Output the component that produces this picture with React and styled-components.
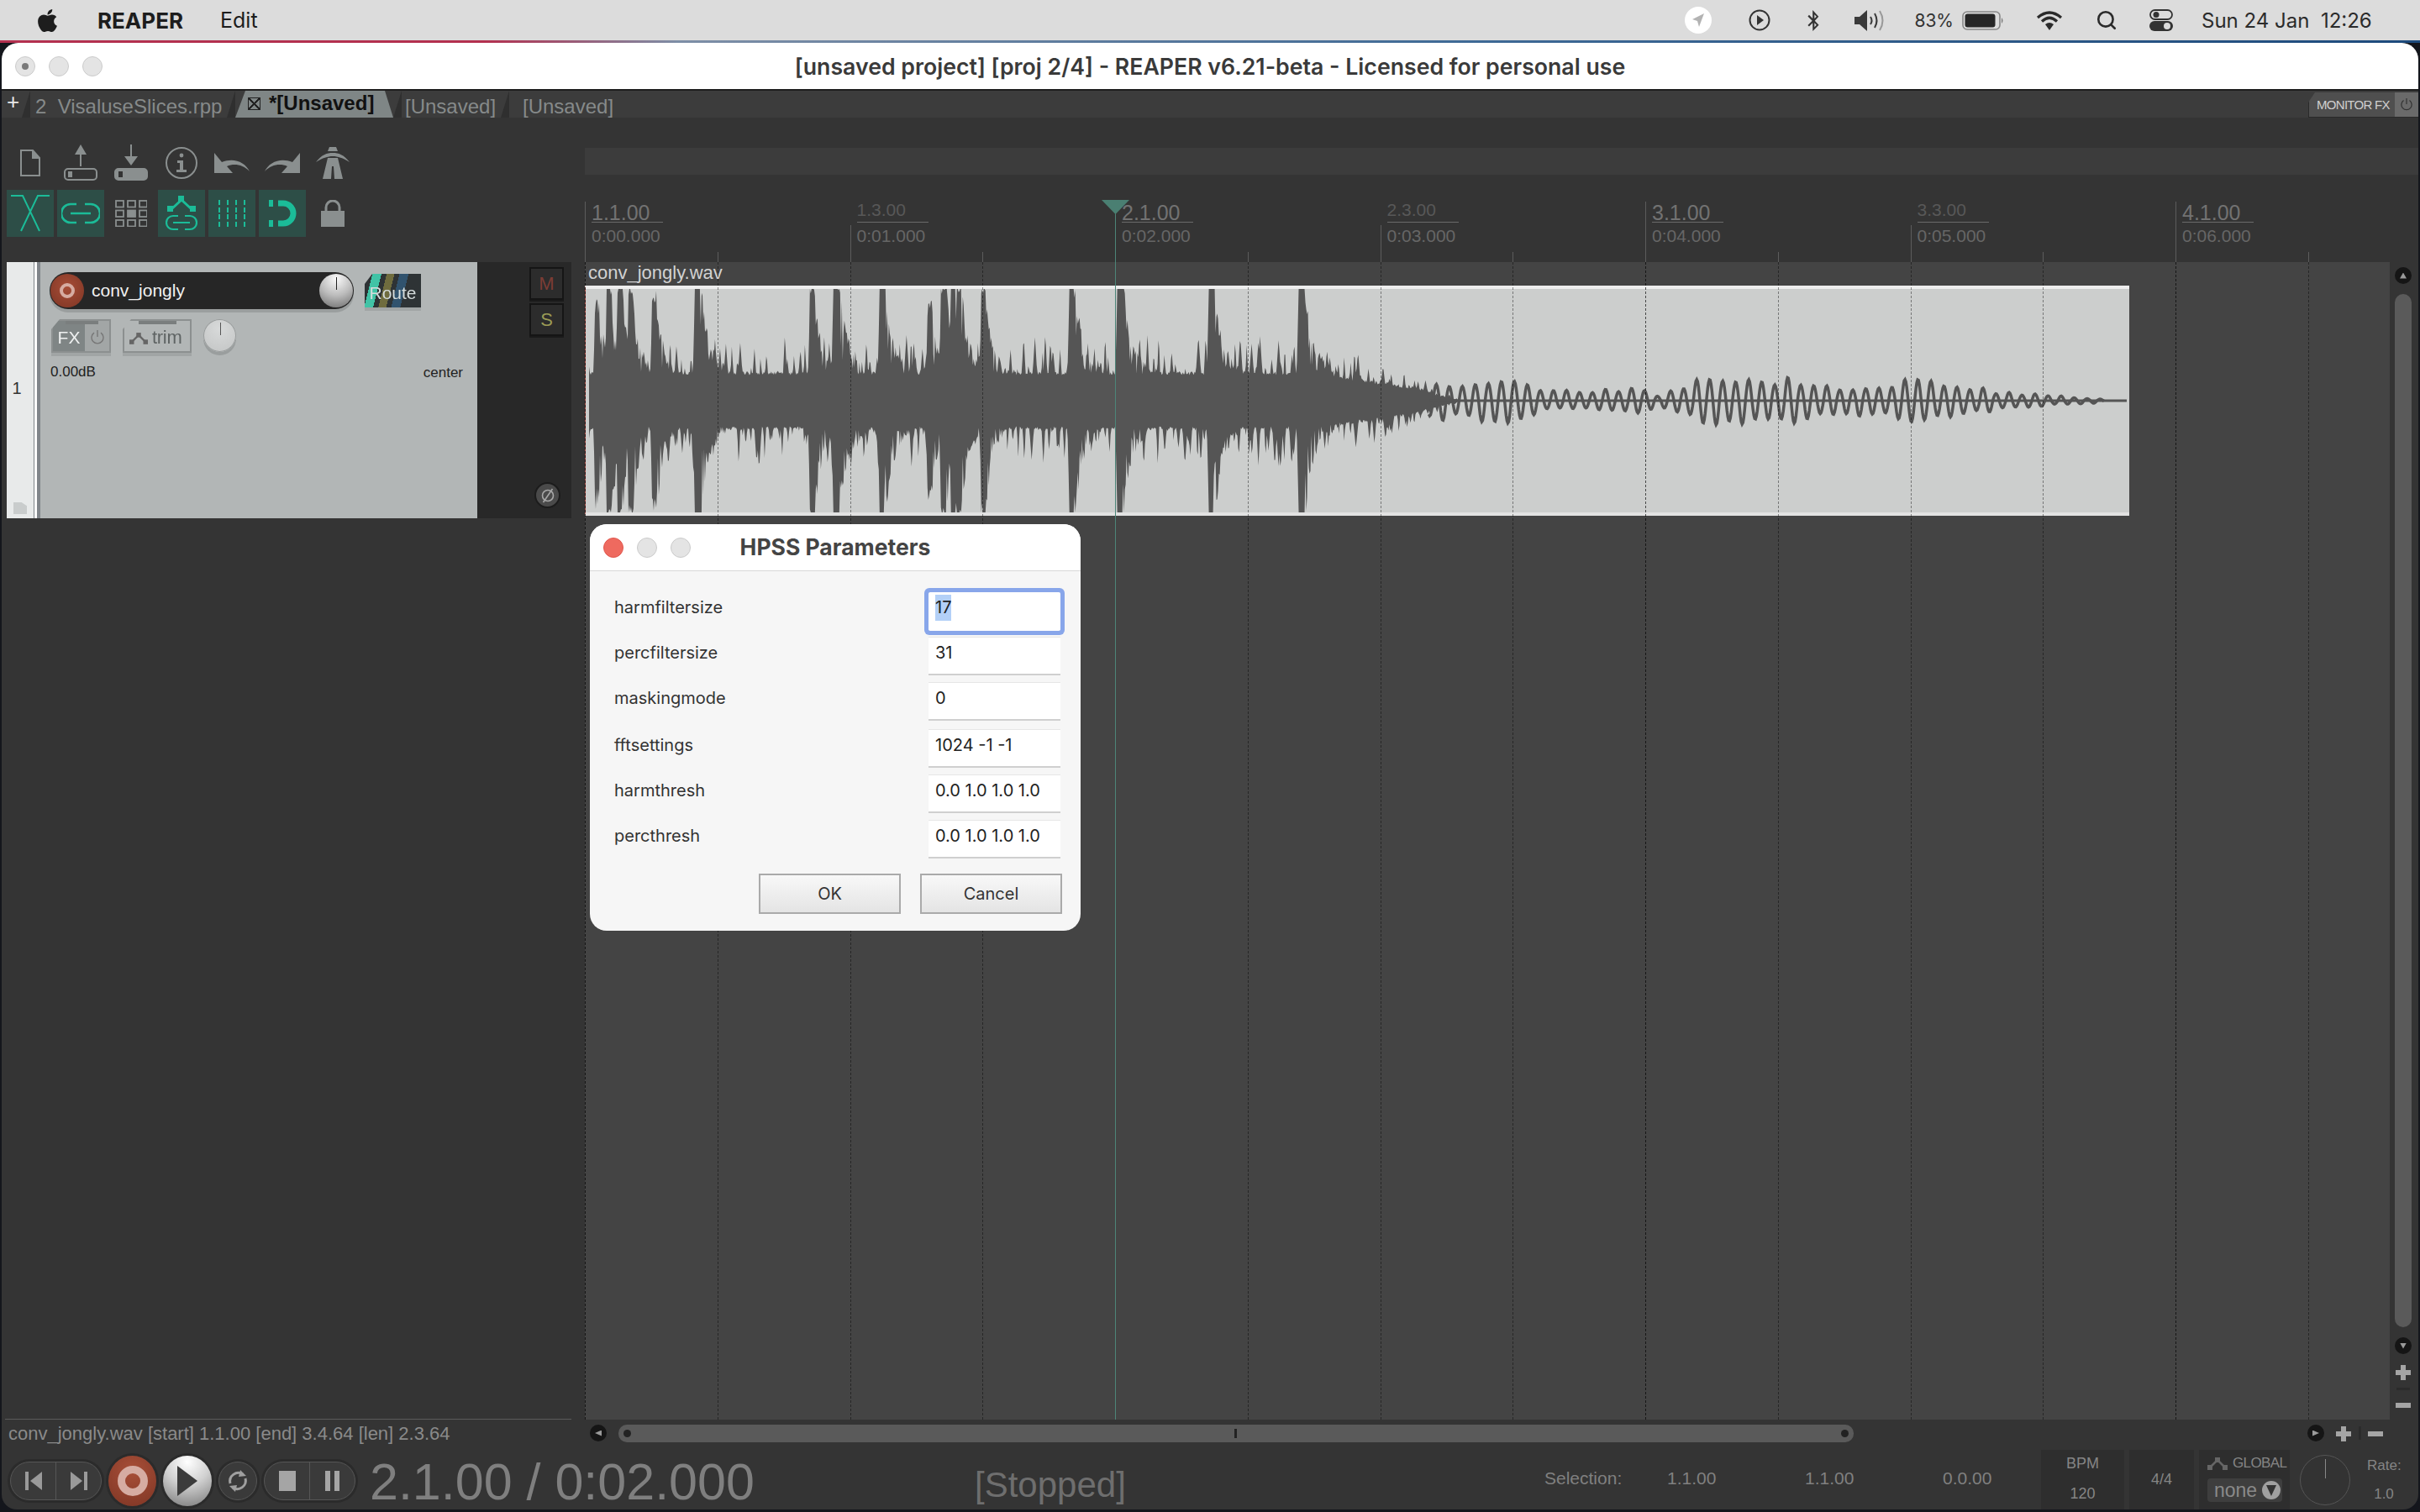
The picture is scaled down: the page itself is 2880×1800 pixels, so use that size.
import React from 'react'
import styled, { createGlobalStyle } from 'styled-components'
import { FaApple, FaBluetoothB } from 'react-icons/fa'
import { Search } from 'lucide-react'

const GlobalStyle = createGlobalStyle`
  html, body { margin: 0; padding: 0; background: #14161c; }
  * { box-sizing: border-box; }
`

const UI = `"Liberation Sans", Arial, sans-serif`
const SYS = `Inter, "Liberation Sans", sans-serif`

// waveform is made up from a seeded noise, so it stays the same on each load
const makeRand = (seed) => () => {
  seed = (seed * 1664525 + 1013904223) % 4294967296
  return seed / 4294967296
}

const ONSETS = [
  [708, 0.85], [722, 1.05], [735, 1.05], [748, 1], [776, 0.95], [827, 1.2], [964, 1.05], [992, 1.25],
  [1047, 1.15], [1104, 0.8], [1120, 1.05], [1132, 1.15], [1139, 1.05], [1168, 1], [1273, 1.2], [1330, 1.2],
  [1439, 1.2], [1546, 1.25],
]

const TAIL = [
  [1710, 0.16], [1800, 0.19], [1840, 0.09], [1900, 0.09], [1945, 0.12], [1975, 0.05], [2026, 0.2], [2138, 0.2],
  [2180, 0.13], [2240, 0.14], [2261, 0.19], [2310, 0.17], [2370, 0.09], [2433, 0.05], [2493, 0.02], [2531, 0],
]

const lerpTail = (x) => {
  for (let i = 0; i < TAIL.length - 1; i++) {
    const [a, va] = TAIL[i]
    const [b, vb] = TAIL[i + 1]
    if (x >= a && x <= b) return va + ((vb - va) * (x - a)) / (b - a)
  }
  return 0
}

const fade = (x) => (x < 1560 ? 1 : Math.max(0.3, 1 - (0.7 * (x - 1560)) / 150))

// one side of the body: a solid core, narrow spikes on top of it, and the hits
const buildSide = (rand, from, to) => {
  const out = new Float32Array(to - from)
  for (let x = from; x < to; x++) out[x - from] = 0.23 * fade(x) + 0.03 * rand()
  let sx = from
  while (sx < to) {
    const h = (0.26 + 0.36 * rand()) * fade(sx)
    const w = 2 + 3 * rand()
    for (let x = Math.floor(sx - w); x <= sx + w; x++) {
      if (x < from || x >= to) continue
      const v = h * (1 - Math.abs(x - sx) / (w + 0.6))
      if (v > out[x - from]) out[x - from] = v
    }
    sx += 2 + rand() * 7
  }
  ONSETS.forEach(([o, s]) => {
    for (let x = o - 5; x < o + 130 && x < to; x++) {
      if (x < from) continue
      const d = x - o
      let v
      if (d < -1) v = s * Math.exp((d + 1) / 1.6)
      else if (d < 5) v = s * (0.9 + 0.25 * rand())
      else {
        const decay = 0.55 * Math.exp(-(d - 5) / 5) + 0.5 * Math.exp(-(d - 5) / 42)
        v = s * decay * (rand() < 0.35 ? 0.45 + 0.4 * rand() : 0.8 + 0.25 * rand())
      }
      if (v > out[x - from]) out[x - from] = v
    }
  })
  return out
}

const buildWave = () => {
  const rand = makeRand(74213)
  const C = 133
  const from = 700
  const to = 1740
  const t = buildSide(rand, from, to)
  const b = buildSide(rand, from, to)
  const top = []
  const bottom = []
  for (let x = from; x < to; x++) {
    // the hits thin out into the low tail
    const k = x > 1690 ? Math.max(0, 1 - (x - 1690) / 50) : 1
    top.push(`${x - 696},${(C - Math.min(1, t[x - from]) * C * k).toFixed(1)}`)
    bottom.unshift(`${x - 696},${(C + Math.min(1, b[x - from]) * C * k).toFixed(1)}`)
  }
  const body = `M${top.join('L')}L${bottom.join('L')}Z`
  const tail = []
  let jitter = 1
  let lastCycle = -1
  for (let x = 1700; x < 2505; x++) {
    const cycle = Math.floor((x * 2) / 15.5)
    if (cycle !== lastCycle) {
      jitter = 0.7 + 0.4 * rand()
      lastCycle = cycle
    }
    const a = lerpTail(Math.max(x, 1710)) * C * jitter
    const y = C - a * Math.sin((x * 2 * Math.PI) / 15.5)
    tail.push(`${x - 696},${y.toFixed(1)}`)
  }
  return { body, tail: `M${tail.join('L')}` }
}

const WAVE = buildWave()

const Page = styled.div`
  position: relative;
  width: 2880px;
  height: 1800px;
  overflow: hidden;
  display: flex;
  flex-direction: column;
  background: #14161c;
  font-family: ${UI};
`

/* mac menu bar */
const MenuBar = styled.div`
  height: 48px;
  background: #dcdcdc;
  display: flex;
  align-items: center;
  color: #1d1d1d;
  font-family: ${SYS};
  font-size: 25px;
  padding-left: 41px;
`
const MenuApp = styled.span`
  font-weight: 700;
  margin-left: 44px;
  font-size: 26px;
`
const MenuItem = styled.span`
  margin-left: 44px;
  font-size: 25px;
`
const MenuStatus = styled.div`
  margin-left: auto;
  display: flex;
  align-items: center;
  padding-right: 38px;
  color: #2b2b2b;
`
const StatusSlot = styled.div`
  width: ${(p) => p.$w}px;
  margin-left: ${(p) => p.$ml}px;
  display: flex;
  justify-content: center;
  align-items: center;
`
const Percent = styled.span`
  font-size: 21px;
  color: #333;
  margin-left: 34px;
`
const Clock = styled.span`
  font-size: 24px;
  margin-left: 34px;
  width: 222px;
  white-space: pre;
`

const Strip = styled.div`
  height: 3px;
  background: linear-gradient(90deg, #b3304f 0, #b3304f 20%, #7d8ea6 28%, #3f6a96 60%, #1d4a7c 100%);
`

const Window = styled.div`
  flex: 1;
  margin: 0 2px 3px;
  display: flex;
  flex-direction: column;
  background: #343434;
  border-radius: 20px 20px 18px 18px;
  overflow: hidden;
`
const TitleBar = styled.div`
  height: 57px;
  background: #fff;
  border-bottom: 2px solid #1e1e1e;
  display: flex;
  align-items: center;
  position: relative;
  padding-left: 16px;
`
const Lights = styled.div`
  display: flex;
  gap: 16px;
`
const Light = styled.div`
  width: 24px;
  height: 24px;
  border-radius: 50%;
  background: ${(p) => p.$color || '#e4e4e4'};
  border: 1px solid ${(p) => (p.$color ? '#e0574e' : '#cbcbcb')};
  display: flex;
  align-items: center;
  justify-content: center;
`
const LightDot = styled.div`
  width: 8px;
  height: 8px;
  border-radius: 50%;
  background: #7a7a7a;
`
const WindowTitle = styled.div`
  flex: 1;
  text-align: center;
  padding-right: 120px;
  font-family: ${SYS};
  font-size: 26.700px;
  font-weight: 600;
  color: #3a3a3a;
  white-space: pre;
`

const TabRow = styled.div`
  height: 32px;
  background: #3c3c3c;
  display: flex;
  align-items: stretch;
  font-size: 24px;
  color: #868a8a;
`
const TabPlus = styled.div`
  width: 24px;
  padding-left: 6px;
  font-size: 26px;
  line-height: 26px;
  color: #e8e8e8;
`
const TabNotch = styled.div`
  width: ${(p) => p.$w || 12}px;
  background: #2f2f2f;
  clip-path: polygon(100% 0, 100% 100%, 0 100%);
`
const Tab = styled.div`
  width: ${(p) => p.$w}px;
  padding-left: ${(p) => p.$pl}px;
  line-height: 38px;
  white-space: pre;
  overflow: hidden;
`
const ActiveTab = styled.div`
  width: 188px;
  background: #7f8686;
  clip-path: polygon(12px 0, calc(100% - 10px) 0, 100% 100%, 0 100%);
  display: flex;
  align-items: center;
  padding: 0 0 2px 15px;
  gap: 10px;
  font-weight: 700;
  color: #111;
  font-size: 24px;
`
const CloseBox = styled.div`
  width: 15px;
  height: 15px;
  border: 1px solid #222;
  position: relative;
  background: linear-gradient(45deg, transparent 46%, #222 46% 54%, transparent 54%),
    linear-gradient(-45deg, transparent 46%, #222 46% 54%, transparent 54%);
`
const MonitorFx = styled.div`
  margin-left: auto;
  width: 131px;
  flex: none;
  margin-top: 2px;
  background: #4f4f4f;
  border-left: 1px solid #2a2a2a;
  border-bottom: 1px solid #2a2a2a;
  clip-path: polygon(8px 0, 100% 0, 100% 100%, 0 100%, 0 12px);
  display: flex;
  align-items: center;
  justify-content: space-between;
  padding-left: 9px;
  font-size: 15px;
  color: #cfcfcf;
  letter-spacing: -0.7px;
  white-space: nowrap;
`
const MonitorPower = styled.div`
  width: 28px;
  height: 100%;
  background: #6a6a6a;
  display: flex;
  align-items: center;
  justify-content: center;
`

const Upper = styled.div`
  height: 1550px;
  display: flex;
`
const LeftColumn = styled.div`
  width: 694px;
  flex: none;
  display: flex;
  flex-direction: column;
`
const Toolbar = styled.div`
  height: 172px;
  padding: 32px 0 0 6px;
  display: grid;
  grid-template-columns: repeat(7, 56px);
  grid-template-rows: 44px 56px;
  column-gap: 4px;
  row-gap: 10px;
`
const ToolCell = styled.div`
  display: flex;
  align-items: center;
  justify-content: center;
  background: ${(p) => (p.$on ? '#2d4e47' : 'transparent')};
`

/* track */
const TrackRow = styled.div`
  height: 305px;
  display: flex;
  margin-left: 6px;
  width: 672px;
`
const TrackNumber = styled.div`
  width: 32px;
  background: #e8eaea;
  position: relative;
  display: flex;
  align-items: center;
  justify-content: center;
  font-size: 20px;
  color: #333;
  padding: 0 8px 4px 0;
`
const FolderMark = styled.div`
  position: absolute;
  left: 8px;
  bottom: 5px;
  width: 16px;
  height: 14px;
  background: #c9cccc;
  clip-path: polygon(0 0, 60% 0, 100% 30%, 100% 100%, 0 100%);
`
const TrackEdge = styled.div`
  width: 8px;
  background: linear-gradient(90deg, #80858a 0 1px, #fff 1px 4px, #80858a 4px);
`
const TrackPanel = styled.div`
  width: 520px;
  background: #b2b6b6;
  padding: 12px 17px 0 11px;
  display: flex;
  flex-direction: column;
`
const PanelRow = styled.div`
  display: flex;
  align-items: flex-start;
  margin-top: ${(p) => p.$mt || 0}px;
  gap: ${(p) => p.$gap || 0}px;
  padding-left: ${(p) => p.$pl || 0}px;
`
const NameBar = styled.div`
  width: 362px;
  height: 44px;
  border-radius: 22px;
  background: #262626;
  box-shadow: 0 4px 0 #9a9e9e;
  display: flex;
  align-items: center;
  padding: 0 1px;
  color: #f2f2f2;
  font-size: 21px;
`
const RecArm = styled.div`
  width: 40px;
  height: 40px;
  border-radius: 50%;
  background: radial-gradient(circle at 50% 40%, #a64d37, #7e3524);
  display: flex;
  align-items: center;
  justify-content: center;
  margin-right: 9px;
`
const RecRing = styled.div`
  width: ${(p) => p.$size || 18}px;
  height: ${(p) => p.$size || 18}px;
  border-radius: 50%;
  border: ${(p) => p.$bw || 4}px solid #d6aca2;
`
const Knob = styled.div`
  position: relative;
  width: ${(p) => p.$size}px;
  height: ${(p) => p.$size}px;
  border-radius: 50%;
  flex: none;
  background: ${(p) => p.$bg};
  box-shadow: ${(p) => p.$shadow || 'none'};
  &::after {
    content: '';
    position: absolute;
    left: 50%;
    top: 4px;
    width: 1px;
    height: ${(p) => Math.round(p.$size * 0.38)}px;
    background: ${(p) => p.$tick || '#222'};
  }
`
const TrimKnob = styled(Knob)`
  margin-left: 14px;
`
const NameText = styled.span`
  flex: 1;
`
const Raised = styled.div`
  filter: drop-shadow(0 4px 0 #a1a5a5);
  margin-left: ${(p) => p.$ml || 0}px;
`
const RouteButton = styled.div`
  width: 67px;
  height: 40px;
  margin-top: 2px;
  clip-path: polygon(9px 0, 100% 0, 100% 100%, 0 100%, 0 12px);
  background:
    linear-gradient(104deg, transparent 12%, #41c3a6 12% 26%, transparent 26% 34%, #6f6c3e 34% 46%, transparent 46% 54%, #31536e 54% 68%, transparent 68%),
    #2e3335;
  color: #d5dcdc;
  font-size: 21px;
  line-height: 46px;
  text-align: center;
`
const CutButton = styled.div`
  width: ${(p) => p.$w}px;
  height: 40px;
  clip-path: polygon(10px 0, 100% 0, 100% 100%, 0 100%, 0 12px);
  border: 2px solid #8c9090;
  display: flex;
  position: relative;
  background: #b2b6b6;
  color: #5f6464;
  font-size: 23px;
  align-items: center;
  &::before {
    content: '';
    position: absolute;
    top: 0;
    left: 22%;
    width: 58%;
    height: 4px;
    background: #7a7e7e;
  }
`
const FxPart = styled.div`
  width: 38px;
  height: 100%;
  background: #7f8585;
  color: #eef0f0;
  font-size: 21px;
  display: flex;
  align-items: center;
  justify-content: center;
  padding-top: 3px;
`
const PowerPart = styled.div`
  flex: 1;
  height: 100%;
  background: #a2a6a6;
  display: flex;
  align-items: center;
  justify-content: center;
  padding-top: 3px;
`
const TrimPart = styled.div`
  flex: 1;
  height: 100%;
  display: flex;
  align-items: center;
  gap: 5px;
  padding: 4px 0 0 6px;
  font-size: 22px;
  letter-spacing: -0.3px;
`
const Readout = styled.div`
  display: flex;
  justify-content: space-between;
  margin: 13px 0 0 1px;
  font-size: 17px;
  color: #222;
`
const PanText = styled.span`
  margin-top: 1px;
`
const TrackSide = styled.div`
  flex: 1;
  background: #282828;
  display: flex;
  flex-direction: column;
  align-items: flex-end;
  padding: 6px 9px 12px 0;
`
const SideButton = styled.div`
  width: 41px;
  height: 39px;
  margin-bottom: 4px;
  background: #2c2c2c;
  border: 2px solid #151515;
  box-shadow: 0 2px 0 #1a1a1a;
  display: flex;
  align-items: center;
  justify-content: center;
  font-size: 22px;
  color: ${(p) => p.$color};
`
const PhaseButton = styled.div`
  margin-top: auto;
  margin-right: 4px;
  width: 31px;
  height: 31px;
  border-radius: 50%;
  background: #4a4a4a;
  border: 2px solid #1c1c1c;
  color: #a8a8a8;
  display: flex;
  align-items: center;
  justify-content: center;
`

/* timeline */
const RightColumn = styled.div`
  flex: 1;
  min-width: 0;
  position: relative;
  display: flex;
  flex-direction: column;
  overflow: hidden;
`
const TopBand = styled.div`
  height: 32px;
  margin-top: 36px;
  background: #3c3c3c;
`
const Ruler = styled.div`
  height: 104px;
  display: flex;
`
const RulerCell = styled.div`
  position: relative;
  width: 315.500px;
  flex: none;
  padding: 33px 0 0 8px;
  &::before {
    content: '';
    position: absolute;
    left: 0;
    bottom: 0;
    width: 1px;
    height: ${(p) => (p.$major ? 72 : 44)}px;
    background: #5c5c5c;
  }
  &::after {
    content: '';
    position: absolute;
    left: 50%;
    bottom: 0;
    width: 1px;
    height: 12px;
    background: #5c5c5c;
  }
`
const RulerBar = styled.div`
  width: 85px;
  height: 24px;
  border-bottom: 1px solid #6a6a6a;
  color: ${(p) => (p.$major ? '#727272' : '#585858')};
  font-size: ${(p) => (p.$major ? 25 : 21)}px;
  line-height: ${(p) => (p.$major ? 24 : 18)}px;
`
const RulerTime = styled.div`
  font-size: 21px;
  line-height: 26px;
  margin-top: 3px;
  color: #666;
`
const Playhead = styled.div`
  position: absolute;
  left: 631px;
  top: 100px;
  bottom: 0;
  width: 1px;
  background: #4d8578;
  z-index: 3;
  &::before {
    content: '';
    position: absolute;
    left: -16px;
    top: -2px;
    width: 33px;
    height: 17px;
    background: #4a7f72;
    clip-path: polygon(0 0, 100% 0, 50% 100%);
  }
`
const ArrangeRow = styled.div`
  flex: 1;
  display: flex;
  min-height: 0;
`
const Arrange = styled.div`
  width: 2148px;
  flex: none;
  position: relative;
  background: #444;
  overflow: hidden;
`
const GridLayer = styled.div`
  position: absolute;
  inset: 0;
  display: flex;
  pointer-events: none;
`
const GridLine = styled.div`
  width: 157.750px;
  flex: none;
  border-left: 1px dashed ${(p) => (p.$measure ? 'rgba(0,0,0,0.65)' : 'rgba(0,0,0,0.42)')};
`
const Clip = styled.div`
  width: 1838px;
`
const ClipName = styled.div`
  height: 28px;
  padding-left: 4px;
  font-size: 22px;
  line-height: 26px;
  color: #d2d2d2;
`
const ClipBody = styled.div`
  height: 274px;
  background: #cccecd;
  border-top: 4px solid #eeeeee;
  border-bottom: 4px solid #e2e2e2;
  border-left: 1px solid #a5473f;
  display: flex;
`
const VScroll = styled.div`
  flex: 1;
  padding: 6px 0 0 6px;
  display: flex;
  flex-direction: column;
  align-items: flex-start;
`
const ScrollArrow = styled.div`
  width: 20px;
  height: 20px;
  border-radius: 50%;
  flex: none;
  background: #151515;
  display: flex;
  align-items: center;
  justify-content: center;
  margin: ${(p) => p.$m || 0};
`
const Tri = styled.div`
  width: 8px;
  height: 7px;
  background: #9a9a9a;
  clip-path: ${(p) =>
    ({
      up: 'polygon(50% 0, 100% 100%, 0 100%)',
      down: 'polygon(0 0, 100% 0, 50% 100%)',
      left: 'polygon(100% 0, 100% 100%, 0 50%)',
      right: 'polygon(0 0, 100% 50%, 0 100%)',
    })[p.$dir]};
`
const VThumb = styled.div`
  width: 20px;
  height: 1230px;
  flex: none;
  border-radius: 10px;
  background: #5a5a5a;
`
const ZoomMark = styled.div`
  color: #9d9d9d;
  width: 18px;
  height: 18px;
  flex: none;
  position: relative;
  margin: ${(p) => p.$m || 0};
  &::before {
    content: '';
    position: absolute;
    left: 0;
    right: 0;
    top: 6px;
    height: 6px;
    background: #a5a5a5;
  }
  &::after {
    content: '';
    display: ${(p) => (p.$plus ? 'block' : 'none')};
    position: absolute;
    top: 0;
    bottom: 0;
    left: 6px;
    width: 6px;
    background: #a5a5a5;
  }
`
const ZoomSep = styled.div`
  background: #2b2b2b;
  flex: none;
  width: ${(p) => p.$w}px;
  height: ${(p) => p.$h}px;
  margin: ${(p) => p.$m};
`

/* lower part */
const Lower = styled.div`
  height: 36px;
  display: flex;
  position: relative;
`
const StatusText = styled.div`
  width: 700px;
  flex: none;
  padding: 5px 0 0 8px;
  position: relative;
  font-size: 22px;
  line-height: 24px;
  color: #8a8a8a;
  white-space: pre;
  &::before {
    content: '';
    position: absolute;
    top: -1px;
    left: 4px;
    width: 674px;
    height: 1px;
    background: #5b5b5b;
  }
`
const HScroll = styled.div`
  flex: 1;
  display: flex;
  align-items: flex-start;
  padding-top: 6px;
`
const HThumb = styled.div`
  width: 1470px;
  height: 21px;
  flex: none;
  margin-left: 14px;
  border-radius: 10px;
  background: #5a5a5a;
  display: flex;
  align-items: center;
  justify-content: space-between;
  padding: 0 6px;
  position: relative;
  &::after {
    content: '';
    position: absolute;
    left: 733px;
    top: 5px;
    width: 3px;
    height: 11px;
    background: #222;
  }
`
const ThumbDot = styled.div`
  width: 9px;
  height: 9px;
  border-radius: 50%;
  background: #222;
`

const Transport = styled.div`
  height: 71px;
  display: flex;
  align-items: flex-start;
  padding-left: 10px;
  color: #8a8a8a;
`
const ButtonCluster = styled.div`
  display: flex;
  align-items: center;
  gap: 8px;
  height: 71px;
  padding-top: 3px;
  flex: none;
`
const Pill = styled.div`
  width: ${(p) => p.$w}px;
  height: 46px;
  border-radius: 23px;
  background: #3a3a3a;
  border: 1px solid #565656;
  box-shadow: 0 0 0 3px #2b2b2b;
  display: flex;
  align-items: stretch;
  overflow: hidden;
`
const PillPart = styled.div`
  flex: 1;
  display: flex;
  align-items: center;
  justify-content: center;
  & + & {
    border-left: 1px solid #565656;
  }
`
const RoundButton = styled.div`
  width: ${(p) => p.$w}px;
  height: ${(p) => p.$h}px;
  border-radius: 50%;
  flex: none;
  background: ${(p) => p.$bg};
  box-shadow: 0 0 0 3px #2b2b2b;
  border: ${(p) => p.$border || 'none'};
  display: flex;
  align-items: center;
  justify-content: center;
`
const BigTime = styled.div`
  width: 735px;
  flex: none;
  padding: 6px 0 0 17px;
  font-size: 61px;
  line-height: 64px;
  color: #7f7f7f;
  white-space: pre;
`
const StateText = styled.div`
  width: 680px;
  flex: none;
  padding: 20px 0 0 2px;
  font-size: 42px;
  line-height: 44px;
  color: #6e6e6e;
`
const SelectionField = styled.div`
  width: ${(p) => p.$w}px;
  flex: none;
  padding-top: 22px;
  font-size: 21px;
  line-height: 24px;
  color: #808080;
`
const InfoBox = styled.div`
  width: ${(p) => p.$w}px;
  height: 71px;
  flex: none;
  margin-right: 6px;
  background: #2e2e2e;
  display: flex;
  flex-direction: column;
  align-items: center;
  justify-content: ${(p) => p.$justify || 'center'};
  padding: ${(p) => p.$pad || 0};
  font-size: 18px;
  color: #858585;
`
const GlobalBox = styled.div`
  width: 108px;
  height: 71px;
  flex: none;
  background: #2e2e2e;
  padding: 6px 0 0 10px;
`
const GlobalLabel = styled.div`
  display: flex;
  align-items: center;
  gap: 6px;
  font-size: 17px;
  letter-spacing: -0.6px;
  color: #858585;
`
const NoneSelect = styled.div`
  width: 89px;
  height: 28px;
  margin-top: 8px;
  background: #3e3e3e;
  border-radius: 4px;
  display: flex;
  align-items: center;
  justify-content: space-between;
  padding: 0 2px 0 8px;
  font-size: 23px;
  color: #8a8a8a;
`
const SelectArrow = styled.div`
  width: 22px;
  height: 22px;
  border-radius: 50%;
  background: #a0a0a0;
  display: flex;
  align-items: center;
  justify-content: center;
`
const RateKnob = styled(Knob)`
  margin: 6px 0 0 12px;
  border: 1px solid #555;
`
const RateBox = styled.div`
  width: 40px;
  flex: none;
  margin-left: 20px;
  padding-top: 9px;
  font-size: 17px;
  color: #858585;
  text-align: center;
`
const RateValue = styled.div`
  margin-top: 14px;
  font-size: 17px;
`

/* dialog */
const Dialog = styled.div`
  position: absolute;
  left: 702px;
  top: 624px;
  width: 584px;
  height: 484px;
  border-radius: 20px;
  background: #f6f6f6;
  overflow: hidden;
  font-family: ${SYS};
  z-index: 5;
`
const DialogHead = styled.div`
  height: 56px;
  background: #fff;
  border-bottom: 1px solid #d8d8d8;
  display: flex;
  align-items: center;
  padding-left: 16px;
`
const DialogTitle = styled.div`
  flex: 1;
  text-align: center;
  padding: 0 120px 2px 0;
  font-size: 26.500px;
  font-weight: 700;
  color: #444;
  white-space: nowrap;
`
const Form = styled.div`
  padding: 25px 24px 0 29px;
`
const FormRow = styled.div`
  display: flex;
  justify-content: space-between;
  margin-top: ${(p) => p.$mt}px;
`
const FormLabel = styled.div`
  font-size: 20px;
  line-height: 36px;
  color: #333;
`
const Field = styled.div`
  width: 157px;
  height: ${(p) => (p.$focus ? 46 : 45)}px;
  padding-left: 8px;
  background: #fff;
  font-size: 20px;
  line-height: 36px;
  color: #222;
  border-bottom: 2px solid ${(p) => (p.$focus ? '#fff' : '#cfcfcf')};
  box-shadow: ${(p) => (p.$focus ? '0 0 0 5px #88a6ea' : '0 -1px 0 #e6e6e6')};
  border-radius: ${(p) => (p.$focus ? '2px' : '0')};
`
const Selected = styled.span`
  background: #b3d0f7;
  padding: 3px 0 4px;
`
const DialogButtons = styled.div`
  display: flex;
  justify-content: flex-end;
  gap: 23px;
  margin: 18px -2px 0 0;
`
const DialogButton = styled.div`
  width: 169px;
  height: 48px;
  border: 2px solid #aaa;
  background: linear-gradient(#f8f8f8, #e4e4e4);
  display: flex;
  align-items: center;
  justify-content: center;
  font-size: 20px;
  color: #333;
`

/* drawn icons */
const GRAY = '#8a8f8f'
const TEAL = '#1bbc98'

const DocIcon = () => (
  <svg width="26" height="34" viewBox="0 0 26 34">
    <path d="M2 2h14l8 9v21H2z M16 2v9h8" fill="none" stroke={GRAY} strokeWidth="2" />
    <path d="M16 2l8 9h-8z" fill={GRAY} />
  </svg>
)
const DriveIcon = ({ up, filled }) => (
  <svg width="42" height="44" viewBox="0 0 42 44">
    <rect x="2" y="29" width="38" height="13" rx="4" fill={filled ? GRAY : 'none'} stroke={GRAY} strokeWidth="2" />
    <rect x="6" y="32" width="5" height="7" fill={filled ? '#333' : GRAY} />
    {up ? <path d="M20 26V12h-6l7-12 7 12h-6v14z" fill={GRAY} /> : <path d="M20 0h2v14h7l-8 11-8-11h7z" fill={GRAY} />}
  </svg>
)
const InfoIcon = () => (
  <svg width="40" height="38" viewBox="0 0 40 38">
    <ellipse cx="20" cy="19" rx="18" ry="18" fill="none" stroke={GRAY} strokeWidth="2" />
    <circle cx="20" cy="10" r="2.400" fill={GRAY} />
    <path d="M15 16h7v11h4v3H14v-3h4v-8h-3z" fill={GRAY} />
  </svg>
)
const UndoIcon = ({ flip }) => (
  <svg width="44" height="26" viewBox="0 0 44 26" transform={flip ? 'scale(-1 1)' : undefined}>
    <path d="M1 1v24h22l-7-8c9-4 19-2 27 6-5-11-19-17-33-11L1 1z" fill={GRAY} />
  </svg>
)
const RoadIcon = () => (
  <svg width="42" height="38" viewBox="0 0 42 38">
    <path d="M1 18C8 9 14 7 21 7s13 2 20 11C33 13 27 11 21 11S9 13 1 18z" fill={GRAY} />
    <path d="M17 0h8l2 5H15z M15 13h12l6 25H23l-1-15h-2l-1 15H9z" fill={GRAY} />
  </svg>
)
const CrossfadeIcon = () => (
  <svg width="46" height="46" viewBox="0 0 46 46">
    <path d="M0 2h14l20 42 M46 2H32L12 44" fill="none" stroke={TEAL} strokeWidth="2" />
  </svg>
)
const LinkIcon = ({ w = 46, h = 26 }) => (
  <svg width={w} height={h} viewBox="0 0 46 26">
    <path d="M18 2H11a11 11 0 0 0 0 22h7 M28 2h7a11 11 0 0 1 0 22h-7 M11 13h24" fill="none" stroke={TEAL} strokeWidth="2.600" />
  </svg>
)
const GridIcon = () => (
  <svg width="38" height="32" viewBox="0 0 38 32">
    {[0, 1, 2].map((r) =>
      [0, 1, 2].map((c) => (
        <rect key={`${r}${c}`} x={1 + c * 14} y={1 + r * 11.5} width="9" height="7.500"
          fill={r === 1 && c === 1 ? GRAY : 'none'} stroke={GRAY} strokeWidth="1.800" />
      ))
    )}
  </svg>
)
const EnvLinkIcon = () => (
  <svg width="38" height="42" viewBox="0 0 38 42">
    <path d="M7 16L19 5l12 11" fill="none" stroke={TEAL} strokeWidth="3" />
    <rect x="15" y="0" width="7" height="7" fill={TEAL} />
    <rect x="2" y="12" width="7" height="7" fill={TEAL} />
    <rect x="29" y="12" width="7" height="7" fill={TEAL} />
    <path d="M15 24H9a8 8 0 0 0 0 16h6 M23 24h6a8 8 0 0 1 0 16h-6 M9 32h20" fill="none" stroke={TEAL} strokeWidth="2.200" />
  </svg>
)
const BarsIcon = () => (
  <svg width="34" height="32" viewBox="0 0 34 32">
    {[2, 12, 22, 32].map((x) => (
      <path key={x} d="M0 0v6M0 9v6M0 17v6M0 26v6" transform={`translate(${x} 0)`} stroke={TEAL} strokeWidth="2" />
    ))}
  </svg>
)
const MagnetIcon = () => (
  <svg width="34" height="34" viewBox="0 0 34 34">
    <path d="M12 5h6a12 12 0 0 1 0 24h-6" fill="none" stroke={TEAL} strokeWidth="7" />
    <rect x="1" y="1" width="5" height="8" fill={TEAL} />
    <rect x="1" y="25" width="5" height="8" fill={TEAL} />
  </svg>
)
const LockIcon = () => (
  <svg width="28" height="32" viewBox="0 0 28 32">
    <path d="M6 14V9a8 8 0 0 1 16 0v5" fill="none" stroke={GRAY} strokeWidth="3" />
    <rect x="0" y="13" width="28" height="19" fill={GRAY} />
  </svg>
)
const PowerIcon = ({ size = 16, color = '#777' }) => (
  <svg width={size} height={size * 1.2} viewBox="0 0 16 19">
    <path d="M8 1v8 M4 4a7 7 0 1 0 8 0" fill="none" stroke={color} strokeWidth="1.400" />
  </svg>
)
const EnvIcon = ({ w = 24, h = 16, color = '#666' }) => (
  <svg width={w} height={h} viewBox="0 0 24 16">
    <path d="M3 13l9-9 9 9" fill="none" stroke={color} strokeWidth="2.500" />
    <rect x="0" y="10" width="6" height="6" fill={color} />
    <rect x="9" y="1" width="6" height="6" fill={color} />
    <rect x="18" y="10" width="6" height="6" fill={color} />
  </svg>
)
const PhaseIcon = () => (
  <svg width="18" height="18" viewBox="0 0 18 18">
    <circle cx="9" cy="9" r="6.500" fill="none" stroke="#a8a8a8" strokeWidth="1.600" />
    <path d="M14.500 1L3.500 17" stroke="#a8a8a8" strokeWidth="1.600" />
  </svg>
)
const LocationIcon = () => (
  <svg width="32" height="32" viewBox="0 0 32 32">
    <circle cx="16" cy="16" r="16" fill="#fff" />
    <path d="M23 8L9 15l6 2 2 7z" fill="#b3b3b3" />
  </svg>
)
const PlayCircleIcon = () => (
  <svg width="26" height="26" viewBox="0 0 26 26">
    <circle cx="13" cy="13" r="11.500" fill="none" stroke="#333" strokeWidth="2" />
    <path d="M10 7l8 6-8 6z" fill="#333" />
  </svg>
)
const VolumeIcon = () => (
  <svg width="37" height="25" viewBox="0 0 37 25">
    <path d="M0 8h6l9-8v25l-9-8H0z" fill="#3a3a3a" />
    <path d="M19 8q3 4.500 0 9 M24 4q5 8.500 0 17" fill="none" stroke="#3a3a3a" strokeWidth="2" />
    <path d="M30 1q7 11.500 0 23" fill="none" stroke="#999" strokeWidth="2" />
  </svg>
)
const BatteryIcon = () => (
  <svg width="50" height="23" viewBox="0 0 50 23">
    <rect x="1" y="1" width="44" height="21" rx="5" fill="none" stroke="#888" strokeWidth="1.600" />
    <rect x="3.500" y="3.500" width="36" height="16" rx="3" fill="#262626" />
    <path d="M47 8q3 3.500 0 7z" fill="#777" />
  </svg>
)
const WifiIcon = () => (
  <svg width="32" height="24" viewBox="0 0 32 24">
    <path d="M2 9Q16-3 30 9 M7 13.500Q16 5 25 13.500" fill="none" stroke="#2b2b2b" strokeWidth="3.200" />
    <path d="M11 17q5-4 10 0l-5 7z" fill="#2b2b2b" />
  </svg>
)
const ControlIcon = () => (
  <svg width="28" height="26" viewBox="0 0 28 26">
    <rect x="1" y="1" width="26" height="11" rx="5.500" fill="none" stroke="#333" strokeWidth="1.800" />
    <circle cx="8" cy="6.500" r="3.500" fill="#333" />
    <rect x="0" y="14" width="28" height="12" rx="6" fill="#333" />
    <circle cx="21" cy="20" r="4" fill="#dcdcdc" />
  </svg>
)
const PrevIcon = ({ flip }) => (
  <svg width="22" height="24" viewBox="0 0 22 24" transform={flip ? 'scale(-1 1)' : undefined}>
    <rect x="1" y="1" width="4" height="22" fill="#9a9a9a" />
    <path d="M21 1v22L7 12z" fill="#9a9a9a" />
  </svg>
)
const LoopIcon = () => (
  <svg width="26" height="30" viewBox="0 0 26 30">
    <path d="M4 18a10 10 0 0 1 15-11 M22 12a10 10 0 0 1-15 11" fill="none" stroke="#a0a0a0" strokeWidth="3" />
    <path d="M16 2l7 7-9 1z M10 28l-7-7 9-1z" fill="#a0a0a0" />
  </svg>
)

const measures = [
  { bar: '1.1.00', time: '0:00.000', major: true },
  { bar: '1.3.00', time: '0:01.000' },
  { bar: '2.1.00', time: '0:02.000', major: true },
  { bar: '2.3.00', time: '0:03.000' },
  { bar: '3.1.00', time: '0:04.000', major: true },
  { bar: '3.3.00', time: '0:05.000' },
  { bar: '4.1.00', time: '0:06.000', major: true },
]

const fields = [
  { label: 'harmfiltersize', value: '17', focus: true, mt: 0 },
  { label: 'percfiltersize', value: '31', mt: 8 },
  { label: 'maskingmode', value: '0', mt: 9 },
  { label: 'fftsettings', value: '1024 -1 -1', mt: 11 },
  { label: 'harmthresh', value: '0.0 1.0 1.0 1.0', mt: 9 },
  { label: 'percthresh', value: '0.0 1.0 1.0 1.0', mt: 9 },
]

const App = () => {
  return (
    <Page>
      <GlobalStyle />
      <MenuBar>
        <FaApple size={31} color="#1d1d1d" />
        <MenuApp>REAPER</MenuApp>
        <MenuItem>Edit</MenuItem>
        <MenuStatus>
          <StatusSlot $w={32} $ml={0}><LocationIcon /></StatusSlot>
          <StatusSlot $w={26} $ml={44}><PlayCircleIcon /></StatusSlot>
          <StatusSlot $w={20} $ml={41}><FaBluetoothB size={25} color="#333" /></StatusSlot>
          <StatusSlot $w={37} $ml={39}><VolumeIcon /></StatusSlot>
          <Percent>83%</Percent>
          <StatusSlot $w={50} $ml={10}><BatteryIcon /></StatusSlot>
          <StatusSlot $w={32} $ml={38}><WifiIcon /></StatusSlot>
          <StatusSlot $w={26} $ml={39}><Search size={26} strokeWidth={2.4} color="#2b2b2b" /></StatusSlot>
          <StatusSlot $w={28} $ml={38}><ControlIcon /></StatusSlot>
          <Clock>Sun 24 Jan  12:26</Clock>
        </MenuStatus>
      </MenuBar>
      <Strip />
      <Window>
        <TitleBar>
          <Lights>
            <Light><LightDot /></Light>
            <Light />
            <Light />
          </Lights>
          <WindowTitle>[unsaved project] [proj 2/4] - REAPER v6.21-beta - Licensed for personal use</WindowTitle>
        </TitleBar>
        <TabRow>
          <TabPlus>+</TabPlus>
          <TabNotch $w={10} />
          <Tab $w={234} $pl={6}>2  VisaluseSlices.rpp</Tab>
          <TabNotch $w={10} />
          <ActiveTab>
            <CloseBox />
            *[Unsaved]
          </ActiveTab>
          <TabNotch $w={10} />
          <Tab $w={118} $pl={4}>[Unsaved]</Tab>
          <TabNotch $w={10} />
          <Tab $w={140} $pl={16}>[Unsaved]</Tab>
          <MonitorFx>
            MONITOR FX
            <MonitorPower><PowerIcon size={14} color="#333" /></MonitorPower>
          </MonitorFx>
        </TabRow>
        <Upper>
          <LeftColumn>
            <Toolbar>
              <ToolCell><DocIcon /></ToolCell>
              <ToolCell><DriveIcon up /></ToolCell>
              <ToolCell><DriveIcon filled /></ToolCell>
              <ToolCell><InfoIcon /></ToolCell>
              <ToolCell><UndoIcon /></ToolCell>
              <ToolCell><UndoIcon flip /></ToolCell>
              <ToolCell><RoadIcon /></ToolCell>
              <ToolCell $on><CrossfadeIcon /></ToolCell>
              <ToolCell $on><LinkIcon /></ToolCell>
              <ToolCell><GridIcon /></ToolCell>
              <ToolCell $on><EnvLinkIcon /></ToolCell>
              <ToolCell $on><BarsIcon /></ToolCell>
              <ToolCell $on><MagnetIcon /></ToolCell>
              <ToolCell><LockIcon /></ToolCell>
            </Toolbar>
            <TrackRow>
              <TrackNumber>
                1
                <FolderMark />
              </TrackNumber>
              <TrackEdge />
              <TrackPanel>
                <PanelRow $gap={13}>
                  <NameBar>
                    <RecArm><RecRing /></RecArm>
                    <NameText>conv_jongly</NameText>
                    <Knob $size={40} $bg="radial-gradient(circle at 50% 15%, #fafafa, #bcbcbc 50%, #6a6a6a)" />
                  </NameBar>
                  <Raised><RouteButton>Route</RouteButton></Raised>
                </PanelRow>
                <PanelRow $mt={12} $pl={2}>
                  <Raised>
                    <CutButton $w={71}>
                      <FxPart>FX</FxPart>
                      <PowerPart><PowerIcon /></PowerPart>
                    </CutButton>
                  </Raised>
                  <Raised $ml={14}>
                    <CutButton $w={82}>
                      <TrimPart>
                        <EnvIcon w={22} h={15} />
                        trim
                      </TrimPart>
                    </CutButton>
                  </Raised>
                  <TrimKnob $size={39} $tick="#555" $bg="radial-gradient(circle at 50% 30%, #d8dada, #c2c4c4)"
                    $shadow="0 4px 0 #9a9e9e, inset 0 0 0 1px #989c9c" />
                </PanelRow>
                <Readout>
                  <span>0.00dB</span>
                  <PanText>center</PanText>
                </Readout>
              </TrackPanel>
              <TrackSide>
                <SideButton $color="#7c3d35">M</SideButton>
                <SideButton $color="#9a9a55">S</SideButton>
                <PhaseButton><PhaseIcon /></PhaseButton>
              </TrackSide>
            </TrackRow>
          </LeftColumn>
          <RightColumn>
            <TopBand />
            <Ruler>
              {measures.map((m) => (
                <RulerCell key={m.bar} $major={m.major}>
                  <RulerBar $major={m.major}>{m.bar}</RulerBar>
                  <RulerTime>{m.time}</RulerTime>
                </RulerCell>
              ))}
            </Ruler>
            <ArrangeRow>
              <Arrange>
                <Clip>
                  <ClipName>conv_jongly.wav</ClipName>
                  <ClipBody>
                    <svg width="1837" height="266" viewBox="0 0 1838 266">
                      <path d={WAVE.body} fill="#555" />
                      <path d={WAVE.tail} fill="none" stroke="#555" strokeWidth="3.500" />
                      <rect x="1005" y="131.500" width="830" height="3" fill="#555" />
                    </svg>
                  </ClipBody>
                </Clip>
                <GridLayer>
                  {Array.from({ length: 14 }, (_, i) => (
                    <GridLine key={i} $measure={i % 4 === 0} />
                  ))}
                </GridLayer>
              </Arrange>
              <VScroll>
                <ScrollArrow $m="0 0 12px"><Tri $dir="up" /></ScrollArrow>
                <VThumb />
                <ScrollArrow $m="12px 0 13px"><Tri $dir="down" /></ScrollArrow>
                <ZoomMark $plus $m="0 0 0 1px" />
                <ZoomSep $w={16} $h={3} $m="9px 0 0 2px" />
                <ZoomMark $m="9px 0 0 1px" />
              </VScroll>
            </ArrangeRow>
            <Playhead />
          </RightColumn>
        </Upper>
        <Lower>
          <StatusText>conv_jongly.wav [start] 1.1.00 [end] 3.4.64 [len] 2.3.64</StatusText>
          <HScroll>
            <ScrollArrow><Tri $dir="left" /></ScrollArrow>
            <HThumb>
              <ThumbDot />
              <ThumbDot />
            </HThumb>
            <ScrollArrow $m="0 0 0 540px"><Tri $dir="right" /></ScrollArrow>
            <ZoomMark $plus $m="2px 0 0 14px" />
            <ZoomSep $w={3} $h={16} $m="2px 0 0 9px" />
            <ZoomMark $m="2px 0 0 8px" />
          </HScroll>
        </Lower>
        <Transport>
          <ButtonCluster>
            <Pill $w={109}>
              <PillPart><PrevIcon /></PillPart>
              <PillPart><PrevIcon flip /></PillPart>
            </Pill>
            <RoundButton $w={57} $h={60} $bg="radial-gradient(circle at 50% 30%, #a84f38, #7e3524)">
              <RecRing $size={36} $bw={9} />
            </RoundButton>
            <RoundButton $w={58} $h={60} $bg="radial-gradient(circle at 50% 12%, #fff, #d0d0d0 45%, #777)">
              <svg width="26" height="36" viewBox="0 0 26 36"><path d="M1 0l24 18L1 36z" fill="#3c3c3c" /></svg>
            </RoundButton>
            <RoundButton $w={46} $h={46} $bg="#3a3a3a" $border="1px solid #565656"><LoopIcon /></RoundButton>
            <Pill $w={109}>
              <PillPart>
                <svg width="20" height="24" viewBox="0 0 20 24"><rect width="20" height="24" fill="#a5a5a5" /></svg>
              </PillPart>
              <PillPart>
                <svg width="20" height="24" viewBox="0 0 20 24"><path d="M1 0h6v24H1zM12 0h6v24h-6z" fill="#a5a5a5" /></svg>
              </PillPart>
            </Pill>
          </ButtonCluster>
          <BigTime>2.1.00 / 0:02.000</BigTime>
          <StateText>[Stopped]</StateText>
          <SelectionField $w={146}>Selection:</SelectionField>
          <SelectionField $w={164}>1.1.00</SelectionField>
          <SelectionField $w={164}>1.1.00</SelectionField>
          <SelectionField $w={117}>0.0.00</SelectionField>
          <InfoBox $w={99} $justify="space-between" $pad="6px 0 8px">
            <span>BPM</span>
            <span>120</span>
          </InfoBox>
          <InfoBox $w={77}>4/4</InfoBox>
          <GlobalBox>
            <GlobalLabel>
              <EnvIcon w={24} h={16} color="#666" />
              GLOBAL
            </GlobalLabel>
            <NoneSelect>
              none
              <SelectArrow>
                <svg width="12" height="13" viewBox="0 0 12 13"><path d="M0 0h12L6 13z" fill="#333" /></svg>
              </SelectArrow>
            </NoneSelect>
          </GlobalBox>
          <RateKnob $size={60} $tick="#888" $bg="#333" />
          <RateBox>
            Rate:
            <RateValue>1.0</RateValue>
          </RateBox>
        </Transport>
      </Window>

      <Dialog>
        <DialogHead>
          <Lights>
            <Light $color="#ee6a5f" />
            <Light />
            <Light />
          </Lights>
          <DialogTitle>HPSS Parameters</DialogTitle>
        </DialogHead>
        <Form>
          {fields.map((f) => (
            <FormRow key={f.label} $mt={f.mt}>
              <FormLabel>{f.label}</FormLabel>
              <Field $focus={f.focus}>
                {f.focus ? <Selected>{f.value}</Selected> : f.value}
              </Field>
            </FormRow>
          ))}
          <DialogButtons>
            <DialogButton>OK</DialogButton>
            <DialogButton>Cancel</DialogButton>
          </DialogButtons>
        </Form>
      </Dialog>
    </Page>
  )
}

export default App
